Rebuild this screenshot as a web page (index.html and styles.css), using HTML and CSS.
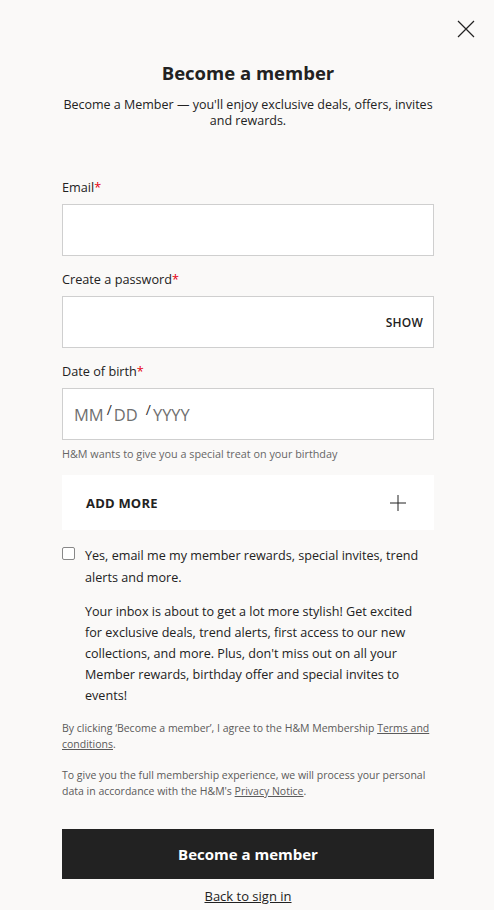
FILE: index.html
```html
<!DOCTYPE html>
<html lang="en">
<head>
<meta charset="utf-8">
<link rel="stylesheet" href="styles.css">
</head>
<body>
<div class="page">
  <div class="topbar">
    <button class="close" aria-label="Close">
      <svg width="18" height="18" viewBox="0 0 18 18"><path d="M1 1L17 17M17 1L1 17" stroke="#222" stroke-width="1.2" fill="none"/></svg>
    </button>
  </div>
  <main class="content">
    <h1 class="title">Become a member</h1>
    <p class="intro">Become a Member — you'll enjoy exclusive deals, offers, invites and rewards.</p>

    <form class="form">
      <div class="field">
        <label class="label">Email<span class="req">*</span></label>
        <div class="input"></div>
      </div>
      <div class="field">
        <label class="label">Create a password<span class="req">*</span></label>
        <div class="input input-pw"><span class="show">SHOW</span></div>
      </div>
      <div class="field field-dob">
        <label class="label">Date of birth<span class="req">*</span></label>
        <div class="input input-dob"><span>MM</span><span class="slash">/</span><span>DD</span><span class="slash slash2">/</span><span>YYYY</span></div>
        <div class="hint">H&amp;M wants to give you a special treat on your birthday</div>
      </div>

      <div class="addmore">
        <span class="addmore-text">ADD MORE</span>
        <svg width="16" height="16" viewBox="0 0 16 16"><path d="M8 0V16M0 8H16" stroke="#222" stroke-width="1" fill="none"/></svg>
      </div>

      <div class="consent">
        <span class="checkbox"></span>
        <div class="consent-text">
          <p class="consent-main">Yes, email me my member rewards, special invites, trend alerts and more.</p>
          <p class="consent-sub">Your inbox is about to get a lot more stylish! Get excited for exclusive deals, trend alerts, first access to our new collections, and more. Plus, don't miss out on all your Member rewards, birthday offer and special invites to events!</p>
        </div>
      </div>

      <p class="legal">By clicking ‘Become a member’, I agree to the H&amp;M Membership <a href="#">Terms and conditions</a>.</p>
      <p class="legal legal2">To give you the full membership experience, we will process your personal data in accordance with the H&amp;M's <a href="#">Privacy Notice</a>.</p>

      <button type="button" class="submit">Become a member</button>
      <a href="#" class="back">Back to sign in</a>
    </form>
  </main>
</div>
</body>
</html>
```

FILE: styles.css
```css
* { box-sizing: border-box; }
html, body { margin: 0; padding: 0; }
body {
  background: #faf9f8;
  color: #222;
  font-family: "Open Sans", "Liberation Sans", sans-serif;
}
.page { width: 494px; height: 910px; overflow: hidden; }
.topbar {
  display: flex;
  justify-content: flex-end;
  padding: 20px 19px 0 0;
  height: 38px;
}
.close {
  border: 0; background: none; padding: 0; margin: 0;
  width: 18px; height: 18px; display: block;
}
.close svg { display: block; }
.content { padding: 0 60px 0 62px; }
.title {
  margin: 23px 0 0;
  text-align: center;
  font-size: 18.5px;
  line-height: 24px;
  font-weight: 700;
}
.intro {
  margin: 12px 0 0;
  text-align: center;
  font-size: 12.5px;
  line-height: 16px;
}
.form { display: flex; flex-direction: column; margin-top: 50px; }
.field { display: flex; flex-direction: column; margin-bottom: 15px; }
.label { font-size: 12.7px; line-height: 16px; margin-bottom: 9px; }
.req { color: #e50010; }
.input {
  height: 52px;
  background: #fff;
  border: 1px solid #cfcfcf;
  display: flex;
  align-items: center;
  padding: 0 11px;
}
.input-pw { justify-content: flex-end; padding-right: 10px; }
.show { font-size: 12px; font-weight: 600; letter-spacing: 0.2px; }
.input-dob { color: #6f6f6f; font-size: 16.5px; }
.slash { font-size: 14px; position: relative; top: -5px; margin: 0 2px 0 3px; color: #333; }
.slash2 { margin-left: 8px; }
.hint { font-size: 10.8px; color: #666; line-height: 14px; margin-top: 7px; }
.field-dob { margin-bottom: 14px; }
.addmore {
  background: #fff;
  height: 55px;
  display: flex;
  align-items: center;
  justify-content: space-between;
  padding: 0 28px 0 24px;
}
.addmore-text { font-size: 13px; font-weight: 700; letter-spacing: 0.2px; }
.consent { display: flex; gap: 10px; margin-top: 15px; }
.checkbox {
  flex: none;
  width: 13px; height: 13px;
  border: 1px solid #888;
  border-radius: 2px;
  margin-top: 2px;
  background: #fff;
}
.consent-text { padding-right: 10px; }
.consent-text p { margin: 0; font-size: 12.6px; line-height: 22px; }
.consent-sub { margin-top: 12px !important; line-height: 21px !important; }
.legal { margin: 14px 0 0; font-size: 10.5px; line-height: 16px; color: #5a5a5a; }
.legal a { color: #5a5a5a; }
.legal2 { margin-top: 15px; }
.submit {
  margin-top: 30px;
  height: 50px;
  background: #222;
  color: #fff;
  border: 0;
  font-family: inherit;
  font-size: 15px;
  font-weight: 700;
}
.back {
  align-self: center;
  margin-top: 9px;
  color: #222;
  font-size: 13px;
  line-height: 16px;
}
```
